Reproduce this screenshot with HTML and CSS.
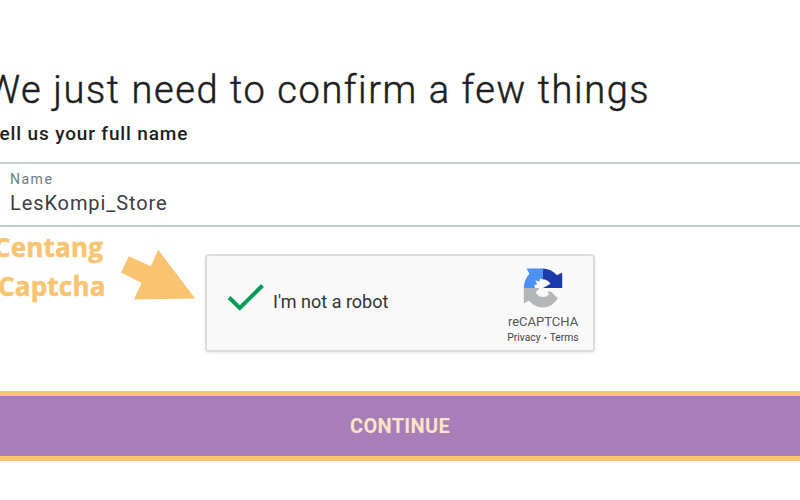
FILE: index.html
```
<!DOCTYPE html>
<html lang="en">
<head>
<meta charset="utf-8">
<title>Confirm</title>
<link rel="stylesheet" href="styles.css">
</head>
<body>
    <h1>We just need to confirm a few things</h1>
    <h2>Tell us your full name</h2>

    <div class="field">
        <label class="field-label">Name</label>
        <div class="field-value">LesKompi_Store</div>
    </div>

    <div class="verify">
        <div class="hint"><span>Centang</span><br><span class="hint-second">Captcha</span></div>
        <svg class="arrow" width="76" height="52" viewBox="120 249 76 52">
            <path fill="#f8c471" d="M128.8 256.3L150.8 266.3 158.2 249.8 195.2 298.5 133.8 299.6 141.6 283 121 272.5z"/>
        </svg>

        <div class="captcha">
            <svg class="check" width="38" height="30" viewBox="0 0 38 30">
                <path fill="none" stroke="#009e55" stroke-width="4" d="M2 14.5L12.8 25 35.5 2.5"/>
            </svg>
            <span class="captcha-text">I'm not a robot</span>
            <div class="brand">
                <svg width="40" height="40" viewBox="0 0 40 40">
                    <path fill="#4a90f5" d="M19.7 0.5V11.2L17 10.5 16.5 13.5 12.5 12.5 14 16.5 11.3 17 12 20H0.8Q0.8 12 6.5 5.8L3.6 0.5z"/>
                    <path fill="#1c3aa9" d="M19.7 0.5Q28 0.5 34 7.2L39.2 4.4V20H20L27.5 15.8Q24.5 11.3 19.7 11.2z"/>
                    <path fill="#b5b6b7" d="M0.8 20H16.5L12.8 24.5Q15 28.8 20 29 24 29 26 26.5L24.5 23.5 28.3 23.8 34.8 30.5Q29 39.5 19.8 39.5 11.5 39.5 6.2 32.8L0.8 35.5z"/>
                </svg>
                <div class="brand-name">reCAPTCHA</div>
                <div class="brand-links">Privacy<span class="dot">•</span>Terms</div>
            </div>
        </div>
    </div>

    <button class="continue">CONTINUE</button>
</body>
</html>
```

FILE: styles.css
```
* {
    box-sizing: border-box;
}
body {
    margin: 0;
    height: 500px;
    overflow: hidden;
    background: #fff;
    color: #1c1e20;
    font-family: Roboto, sans-serif;
}
h1 {
    margin: 65px 0 0 -14px;
    height: 55px;
    line-height: 50px;
    font-size: 38px;
    font-weight: 300;
    letter-spacing: 1.6px;
    -webkit-text-stroke: 0.5px #1c1e20;
    white-space: nowrap;
}
h2 {
    margin: 0 0 0 -12px;
    height: 42px;
    line-height: 28px;
    font-size: 19px;
    font-weight: 500;
    letter-spacing: 0.85px;
    white-space: nowrap;
}
.field {
    height: 65px;
    padding: 6px 10px 0;
    border-top: 2px solid #c5cdd1;
    border-bottom: 2px solid #c5cdd1;
}
.field-label {
    display: block;
    line-height: 18px;
    font-size: 14px;
    letter-spacing: 1.5px;
    color: #6c7a82;
}
.field-value {
    line-height: 30px;
    font-size: 20px;
    letter-spacing: 0.9px;
    color: #3b3d3f;
}
.verify {
    display: flex;
    height: 164px;
}
.hint {
    width: 120px;
    margin-left: -6px;
    padding-top: 1px;
    flex: none;
    line-height: 39px;
    font-family: "Open Sans", sans-serif;
    font-size: 26px;
    font-weight: 700;
    letter-spacing: 0.2px;
    -webkit-text-stroke: 0.5px #f8c471;
    color: #f8c471;
}
.hint-second {
    margin-left: 4px;
}
.arrow {
    flex: none;
    margin: 22px 0 0 6px;
}
.captcha {
    display: flex;
    flex: none;
    width: 390px;
    height: 98px;
    margin: 27px 0 0 9px;
    border: 2px solid #dcdcdc;
    border-radius: 4px;
    background: #f9f9f9;
    box-shadow: 0 1px 3px rgba(0, 0, 0, 0.1);
}
.check {
    margin: 27px 0 0 20px;
}
.captcha-text {
    width: 225px;
    margin-left: 8px;
    line-height: 92px;
    font-size: 18px;
    color: #333;
}
.brand {
    width: 90px;
    padding-top: 12px;
    text-align: center;
    color: #555;
}
.brand svg {
    display: block;
    margin: 0 auto;
}
.brand-name {
    margin-top: 6px;
    line-height: 16px;
    font-size: 13px;
}
.brand-links {
    line-height: 16px;
    font-size: 10.3px;
    color: #444;
}
.dot {
    margin: 0 3px;
    font-size: 9px;
}
.continue {
    display: block;
    width: 820px;
    height: 70px;
    margin-left: -10px;
    border: 5px solid #f8c471;
    background: #a87eb9;
    color: #fbe4c8;
    font-family: Roboto, sans-serif;
    font-size: 20px;
    font-weight: 700;
    letter-spacing: 0.3px;
}
```
